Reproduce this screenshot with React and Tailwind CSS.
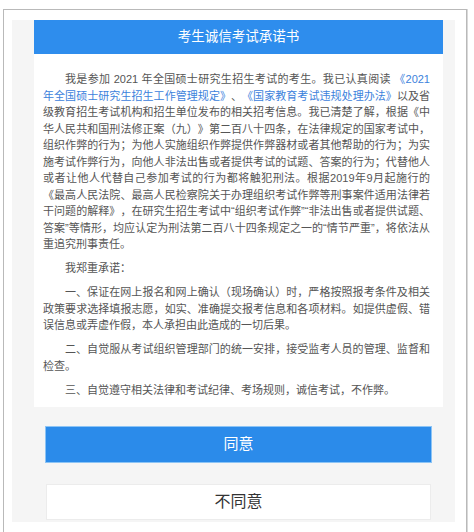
import React from 'react';

const font = { fontFamily: '"Liberation Sans", "Noto Sans CJK SC", sans-serif' };

const Link = ({ children }) => <span className="text-[#3c82dc]">{children}</span>;

const App = () => {
  return (
    <div className="w-[474px] h-[532px] bg-white overflow-hidden pt-[9px] pl-[3px]" style={font}>
      <div className="w-[464px] h-[540px] border border-[#b9b9b9] shadow-[1px_0_0_#d9d9d9] bg-white pt-[10px] pl-[8px]">
        <div className="w-[443px] h-[502px] bg-[#f5f5f5] pl-[22px] pr-[12px]">
          {/* header */}
          <div className="h-[34px] bg-[#2e8ded] flex items-center justify-center text-white text-[13.5px]">
            考生诚信考试承诺书
          </div>

          {/* body */}
          <div className="bg-white pt-[17px] pb-[1px] pl-[9px] pr-[13px] text-[11px] leading-[16.5px] text-[#555] text-justify [text-spacing-trim:space-all]">
            <p className="mb-[7.5px] indent-[2em]">
              我是参加 2021 年全国硕士研究生招生考试的考生。我已认真阅读 <Link>《2021年全国硕士研究生招生工作管理规定》</Link>、<Link>《国家教育考试违规处理办法》</Link>以及省级教育招生考试机构和招生单位发布的相关招考信息。我已清楚了解，根据《中华人民共和国刑法修正案（九）》第二百八十四条，在法律规定的国家考试中，组织作弊的行为；为他人实施组织作弊提供作弊器材或者其他帮助的行为；为实施考试作弊行为，向他人非法出售或者提供考试的试题、答案的行为；代替他人或者让他人代替自己参加考试的行为都将触犯刑法。根据2019年9月起施行的《最高人民法院、最高人民检察院关于办理组织考试作弊等刑事案件适用法律若干问题的解释》，在研究生招生考试中“组织考试作弊”“非法出售或者提供试题、答案”等情形，均应认定为刑法第二百八十四条规定之一的“情节严重”，将依法从重追究刑事责任。
            </p>
            <p className="mb-[7.5px] indent-[2em]">我郑重承诺：</p>
            <p className="mb-[7.5px] indent-[2em]">
              一、保证在网上报名和网上确认（现场确认）时，严格按照报考条件及相关政策要求选择填报志愿，如实、准确提交报考信息和各项材料。如提供虚假、错误信息或弄虚作假，本人承担由此造成的一切后果。
            </p>
            <p className="mb-[7.5px] indent-[2em]">
              二、自觉服从考试组织管理部门的统一安排，接受监考人员的管理、监督和检查。
            </p>
            <p className="mb-[7.5px] indent-[2em]">
              三、自觉遵守相关法律和考试纪律、考场规则，诚信考试，不作弊。
            </p>
          </div>

          {/* buttons */}
          <div className="mt-[19px] ml-[11px] w-[387px] flex flex-col gap-[21px]">
            <button className="h-[37px] bg-[#2b8bea] border border-[#8cc4f5] text-white text-[15px]">
              同意
            </button>
            <button className="h-[36px] mx-[1px] bg-white border border-[#ececec] text-[#333] text-[16px]">
              不同意
            </button>
          </div>
        </div>
      </div>
    </div>
  );
};

export default App;
